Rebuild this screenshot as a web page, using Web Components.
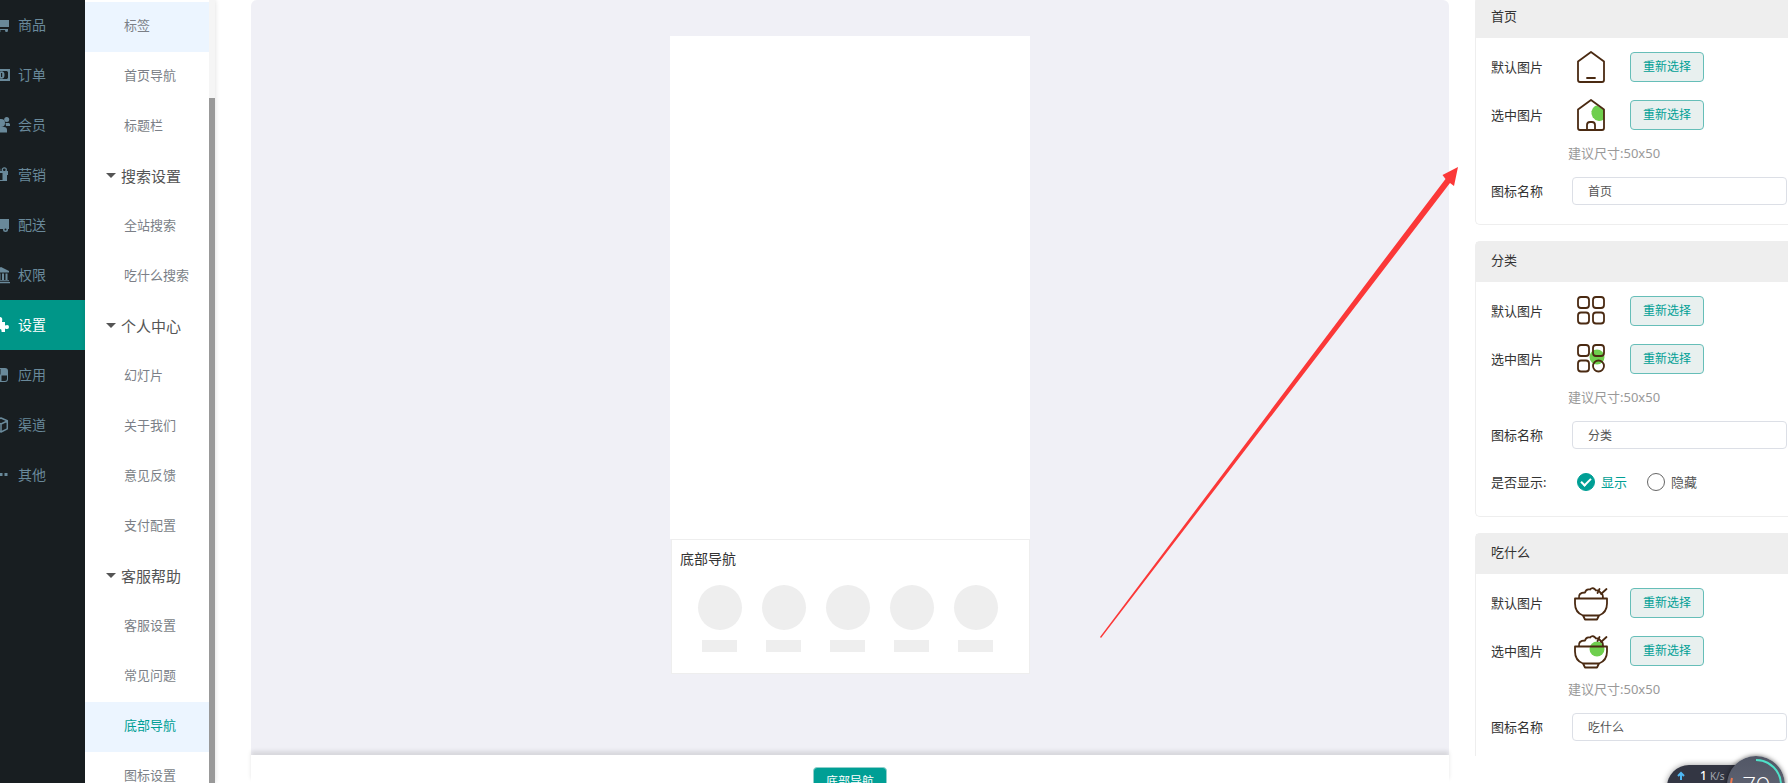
<!DOCTYPE html>
<html lang="zh-CN">
<head>
<meta charset="utf-8">
<meta name="viewport" content="width=device-width, initial-scale=1">
<title>底部导航</title>
<style>
  html, body {
    margin: 0;
    height: 100%;
    overflow: hidden;
  }

  body {
    background: #fff;
    color: #333;
    font-family: "Noto Sans", "Noto Sans CJK SC", sans-serif;
    font-size: 13px;
    line-height: 20px;
    --theme: #009f95;
  }
</style>
</head>
<body>
<admin-page></admin-page>

<script>
// Main navigation glyphs, 17x17
const NAV_ICONS = {
  cart: '<path d="M0 1h3l1 2h12v7H5v2h10v1H4L2 2H0z"/><circle cx="6" cy="14" r="1.500"/><circle cx="13.500" cy="13.500" r="1.500"/>',
  money: '<path fill-rule="evenodd" d="M0 2h17v12H0zM3 4a2 2 0 0 1-1 1v6a2 2 0 0 1 1 1h11a2 2 0 0 1 1-1V5a2 2 0 0 1-1-1z"/><ellipse cx="8.500" cy="8" rx="3" ry="3.700"/><path d="M8 6h1.200v4H8z" fill="#181e21"/>',
  users: '<circle cx="8" cy="6" r="4"/><path d="M2 15.500V13q0-3 3-3h6q3 0 3 3v2.500z"/><circle cx="13.700" cy="2.500" r="2.500"/><circle cx="2" cy="2.500" r="2.500"/><path d="M12.500 6H16l1 1v2H13zM0 6h4l-1 4H0z"/>',
  gift: '<path d="M1 4h14v4H1zM2 8h12v6H2z"/><circle cx="11.300" cy="2.800" r="2" fill="none" stroke="currentColor" stroke-width="1.300"/><circle cx="4.700" cy="2.800" r="2" fill="none" stroke="currentColor" stroke-width="1.300"/><path d="M7 6h2.500v7H7z" fill="#181e21"/>',
  truck: '<path d="M6 2h10v10H0V7l3-3h3z"/><circle cx="4" cy="13" r="2"/><circle cx="12.500" cy="12.500" r="2.500"/><circle cx="12.500" cy="12.500" r="1" fill="#181e21"/>',
  bank: '<path d="M8 0l8 4v1.500H0V4zM2 6.500h2V13H2zM5.500 6.500h2V13h-2zM9 6.500h2V13H9zM12.500 6.500h2V13h-2zM1 13.200h15v1H1zM0 15h17v1.300H0z"/>',
  puzzle: '<path d="M1 5h4.500Q4 0 7 0t2 5H12v3.500q4-1.500 4 1.500t-4 1.500V15H8.500Q9 12 7 12t-1.500 3H1z"/>',
  blocks: '<path d="M3 1h9q3 0 3 3v8q0 3-3 3H3q-3 0-3-3V4q0-3 3-3z"/><path d="M8.500 8.500H14V12q0 2-2 2H8.500zM1 4q0-2 2-2h4.500v5.500H1z" fill="#181e21"/>',
  cube: '<path d="M8 1l6.300 2.800v8L8 15l-6.300-3.200v-8zM1.700 4L8 7l6.300-3M8 7v8" fill="none" stroke="currentColor" stroke-width="1.500" stroke-linejoin="round"/>',
  dots: '<path d="M1 6h3v3H1zM6.500 6h3v3h-3zM11.500 6h3v3h-3z"/>',
};

// Tab bar icons, 40x40
const STROKE = 'fill="none" stroke="#4a2a12" stroke-width="1.800" stroke-linejoin="round" stroke-linecap="round"';
const GREEN = '<circle cx="26" cy="18" r="7.500" fill="#6fcf4e"/>';
const HOUSE = 'M7 14.500L20 5l13 9.500V33q0 2-2 2H9q-2 0-2-2z';
const BOWL = 'M4 15.500h32v5q0 9-8 12H12q-8-3-8-12zM12 32.500l2 4h12l2-4M8 15.500q-1-6 6-6 1-4 5-3 3-3 6 1 3-1 5 3 2 0 2 5M26.500 10l2-4M30 11l5.500-5';
const TAB_ICONS = {
  home: `<path d="${HOUSE}M16 31h8" ${STROKE}/>`,
  homeOn: `<path d="M24 11l2-.5 7 4.500v9.500A7.500 7.500 0 1 1 24 11z" fill="#6fcf4e"/><path d="${HOUSE}M16 35v-5q0-3 3-3h2q3 0 3 3v5" ${STROKE}/>`,
  grid: `<g ${STROKE}><rect x="7" y="6" width="11" height="11" rx="3"/><rect x="22" y="6" width="11" height="11" rx="3"/><rect x="7" y="21.500" width="11" height="11" rx="3"/><rect x="22" y="21.500" width="11" height="11" rx="3"/></g>`,
  gridOn: `${GREEN}<g ${STROKE}><rect x="7" y="6" width="11" height="11" rx="3"/><rect x="22" y="6" width="11" height="11" rx="3"/><rect x="7" y="21.500" width="11" height="11" rx="3"/><circle cx="27.500" cy="27" r="5.500"/></g>`,
  bowl: `<path d="${BOWL}" ${STROKE}/>`,
  bowlOn: `${GREEN}<path d="${BOWL}" ${STROKE}/>`,
};

class NavItem extends HTMLElement {
  connectedCallback() {
    const active = this.hasAttribute('active');
    this.attachShadow({ mode: 'open' }).innerHTML = `
      <style>
        :host {
          display: block;
          color: #69899a;
        }

        :host([active]) {
          background: #009688;
          color: #fff;
        }

        a {
          display: flex;
          align-items: center;
          gap: 8px;
          height: 50px;
          margin-left: -7px;
          color: inherit;
          font-size: 14px;
          text-decoration: none;
        }

        svg {
          width: 17px;
          height: 17px;
          fill: currentColor;
        }
      </style>
      <a href="#" ${active ? 'aria-current="page"' : ''}>
        <svg viewBox="0 0 17 17" aria-hidden="true">${NAV_ICONS[this.getAttribute('icon')]}</svg>
        <slot></slot>
      </a>
    `;
  }
}

class MainNav extends HTMLElement {
  constructor() {
    super();
    this.attachShadow({ mode: 'open' }).innerHTML = `
      <style>
        :host {
          display: block;
          width: 85px;
          overflow: hidden;
          background: #181e21;
        }
      </style>
      <nav><slot></slot></nav>
    `;
  }
}

class MenuItem extends HTMLElement {
  connectedCallback() {
    this.attachShadow({ mode: 'open' }).innerHTML = `
      <style>
        :host {
          display: block;
          color: #7b7f87;
        }

        :host([active]) {
          color: var(--theme);
        }

        :host([active]), :host([hover]) {
          background: #ecf5ff;
        }

        a {
          display: block;
          padding: 0 0 4px 39px;
          color: inherit;
          line-height: 46px;
          text-decoration: none;
        }
      </style>
      <a href="#"><slot></slot></a>
    `;
  }
}

class MenuGroup extends HTMLElement {
  connectedCallback() {
    this.attachShadow({ mode: 'open' }).innerHTML = `
      <style>
        :host {
          display: block;
        }

        button {
          display: flex;
          align-items: center;
          gap: 5px;
          width: 100%;
          height: 50px;
          padding: 0 0 3px 21px;
          border: 0;
          background: none;
          color: #555;
          font: inherit;
          font-size: 15px;
        }

        i {
          border: 5px solid transparent;
          border-top-color: #555;
          border-bottom: 0;
        }
      </style>
      <button type="button" aria-expanded="true"><i></i>${this.getAttribute('label')}</button>
      <slot></slot>
    `;
  }
}

class SideMenu extends HTMLElement {
  constructor() {
    super();
    this.attachShadow({ mode: 'open' }).innerHTML = `
      <style>
        :host {
          display: flex;
          width: 130px;
          overflow: hidden;
          box-shadow: 0 0 5px rgba(0, 0, 0, 0.14);
        }

        nav {
          flex: 1;
          padding-top: 2px;
        }

        .track {
          width: 6px;
          padding-top: 98px;
          box-sizing: border-box;
          background: #f5f5f5;
        }

        .thumb {
          height: 100%;
          background: #999;
        }
      </style>
      <nav><slot></slot></nav>
      <div class="track"><div class="thumb"></div></div>
    `;
  }
}

class PhonePreview extends HTMLElement {
  constructor() {
    super();
    this.attachShadow({ mode: 'open' }).innerHTML = `
      <style>
        :host {
          display: block;
          width: 360px;
        }

        .screen {
          height: 503px;
          background: #fff;
        }

        .tabbar {
          margin-left: 1px;
          padding: 9px 8px 21px;
          border: 1px solid #eee;
          background: #fff;
        }

        h2 {
          margin: 0 0 16px;
          color: #333;
          font-size: 14px;
          font-weight: normal;
          line-height: 20px;
        }

        ul {
          display: flex;
          justify-content: center;
          gap: 20px;
          margin: 0;
          padding: 0 6px 0 0;
          list-style: none;
        }

        li {
          display: flex;
          flex-direction: column;
          align-items: center;
          gap: 10px;
        }

        li::before {
          content: "";
          width: 44px;
          height: 45px;
          border-radius: 50%;
          background: #eee;
        }

        li::after {
          content: "";
          width: 35px;
          height: 12px;
          background: #eee;
        }
      </style>
      <div class="screen"></div>
      <div class="tabbar">
        <h2>底部导航</h2>
        <ul><li></li><li></li><li></li><li></li><li></li></ul>
      </div>
    `;
  }
}

class PageEditor extends HTMLElement {
  constructor() {
    super();
    this.attachShadow({ mode: 'open' }).innerHTML = `
      <style>
        :host {
          display: flex;
          flex-direction: column;
        }

        .canvas {
          flex: 1;
          display: flex;
          justify-content: center;
          align-items: flex-start;
          padding-top: 36px;
          border-radius: 6px 6px 0 0;
          background: #f0f0f6;
        }

        footer {
          display: flex;
          justify-content: center;
          height: 16px;
          padding-top: 12px;
          background: #fff;
          box-shadow: 0 -4px 4px rgba(0, 0, 0, 0.1);
        }

        button {
          height: 30px;
          padding: 0 12px;
          border: 1px solid #8fd0cb;
          border-radius: 4px;
          background: var(--theme);
          color: #fff;
          font: inherit;
          font-size: 12px;
          flex-shrink: 0;
        }
      </style>
      <div class="canvas"><slot></slot></div>
      <footer><button type="button">底部导航</button></footer>
    `;
  }
}

class TabCard extends HTMLElement {
  connectedCallback() {
    const name = this.getAttribute('name');
    const icon = this.getAttribute('icon');

    this.attachShadow({ mode: 'open' }).innerHTML = `
      <style>
        :host {
          display: block;
          padding-bottom: 19px;
          border: 1px solid #eee;
          border-right: 0;
          border-radius: 5px 0 0 5px;
          color: #333;
        }

        h3 {
          margin: 0 0 14px;
          padding: 8px 15px 12px;
          background: #eee;
          font-size: 13px;
          font-weight: normal;
          line-height: 20px;
        }

        .row {
          display: flex;
          align-items: center;
          height: 30px;
          margin-bottom: 18px;
          padding: 0 1px 0 15px;
        }

        .row > :first-child {
          width: 81px;
        }

        .picture svg {
          display: block;
          width: 40px;
          height: 40px;
          margin: 0 19px 0 -1px;
        }

        .picture button {
          width: 74px;
          height: 30px;
          padding: 0;
          border: 1px solid #66beb8;
          border-radius: 4px;
          background: #e8f0ef;
          color: var(--theme);
          font: inherit;
          font-size: 12px;
        }

        p {
          margin: -5px 0 14px 92px;
          color: #999;
        }

        .field {
          height: 28px;
          margin-bottom: 0;
        }

        input[type="text"] {
          flex: 1;
          min-width: 0;
          height: 28px;
          padding: 0 15px;
          box-sizing: border-box;
          border: 1px solid #dcdfe6;
          border-radius: 4px;
          color: #555;
          font: inherit;
          font-size: 12px;
        }

        .choice {
          margin: 18px 0 0;
        }

        .choice > :first-child {
          width: 86px;
        }

        .choice label {
          display: flex;
          align-items: center;
          gap: 6px;
          margin-right: 20px;
          color: #555;
        }

        .choice label:has(:checked) {
          color: var(--theme);
        }

        input[type="radio"] {
          appearance: none;
          display: grid;
          place-items: center;
          width: 18px;
          height: 18px;
          margin: 0;
          border: 1px solid #666;
          border-radius: 50%;
        }

        input[type="radio"]:checked {
          border-color: var(--theme);
          background: var(--theme);
        }

        input[type="radio"]:checked::before {
          content: "";
          width: 8px;
          height: 4px;
          margin-bottom: 3px;
          border: solid #fff;
          border-width: 0 0 2px 2px;
          transform: rotate(-45deg);
        }
      </style>
      <h3>${name}</h3>
      <div class="row picture">
        <span>默认图片</span>
        <svg viewBox="0 0 40 40" aria-hidden="true">${TAB_ICONS[icon]}</svg>
        <button type="button">重新选择</button>
      </div>
      <div class="row picture">
        <span>选中图片</span>
        <svg viewBox="0 0 40 40" aria-hidden="true">${TAB_ICONS[icon + 'On']}</svg>
        <button type="button">重新选择</button>
      </div>
      <p>建议尺寸:50x50</p>
      <div class="row field">
        <label for="name">图标名称</label>
        <input type="text" id="name" value="${name}">
      </div>
      ${this.hasAttribute('toggle') ? `
        <div class="row choice" role="radiogroup" aria-labelledby="show">
          <span id="show">是否显示:</span>
          <label><input type="radio" name="show" checked>显示</label>
          <label><input type="radio" name="show">隐藏</label>
        </div>
      ` : ''}
    `;
  }
}

class CardList extends HTMLElement {
  constructor() {
    super();
    this.attachShadow({ mode: 'open' }).innerHTML = `
      <style>
        :host {
          display: block;
          overflow: hidden;
          margin-bottom: 27px;
        }

        .list {
          display: flex;
          flex-direction: column;
          gap: 16px;
          margin-top: -3px;
        }
      </style>
      <div class="list"><slot></slot></div>
    `;
  }
}

// Red pointer laid over the page
class PointerArrow extends HTMLElement {
  constructor() {
    super();
    this.attachShadow({ mode: 'open' }).innerHTML = `
      <style>
        :host {
          position: absolute;
          top: 167px;
          right: 330px;
          width: 358px;
          height: 471px;
          pointer-events: none;
        }

        svg {
          display: block;
        }
      </style>
      <svg width="358" height="471" viewBox="0 0 358 471" aria-hidden="true">
        <path d="M358 0L354 19L350 16L291 93L1 471L0 470L284 93L345.500 12L342.500 8Z" fill="#fb3838"/>
      </svg>
    `;
  }
}

// Floating network speed gadget in the corner
class SpeedBall extends HTMLElement {
  constructor() {
    super();
    this.attachShadow({ mode: 'open' }).innerHTML = `
      <style>
        :host {
          position: absolute;
          right: 3px;
          bottom: -31px;
          display: flex;
          align-items: flex-start;
        }

        .rate {
          display: flex;
          align-items: center;
          gap: 3px;
          width: 80px;
          height: 44px;
          margin: 9px -20px 0 0;
          padding: 0 0 22px 10px;
          box-sizing: border-box;
          border-radius: 22px 0 0 22px;
          background: #333643;
          box-shadow: 0 0 6px rgba(0, 0, 0, 0.4);
          color: #a5a8b0;
          font-size: 10px;
        }

        .rate svg {
          margin-right: 12px;
        }

        b {
          color: #fff;
          font-size: 12px;
          font-weight: 500;
        }

        .ball {
          display: grid;
          place-items: center;
          position: relative;
          width: 58px;
          height: 58px;
          border-radius: 50%;
          background: linear-gradient(#525766, #666a79);
          box-shadow: 0 0 5px rgba(0, 0, 0, 0.6);
          color: #fff;
          font-family: Lato, sans-serif;
          font-size: 24px;
          font-weight: 300;
          line-height: 24px;
        }

        .ball svg {
          position: absolute;
          inset: 0;
        }
      </style>
      <div class="rate">
        <svg width="8" height="10" viewBox="0 0 8 10" aria-hidden="true">
          <path d="M4 9V2M1 5l3-3 3 3" fill="none" stroke="#4fb9f5" stroke-width="2"/>
        </svg>
        <b>1</b><span>K/s</span>
      </div>
      <div class="ball">
        <svg width="58" height="58" viewBox="0 0 58 58" fill="none" stroke-width="2" aria-hidden="true">
          <path d="M29 4A25 25 0 0 1 54 29" stroke="#4fe0c8"/>
          <path d="M4 29Q4 26 5 22" stroke="#f0794f"/>
        </svg>
        70
      </div>
    `;
  }
}

class AdminPage extends HTMLElement {
  constructor() {
    super();
    this.attachShadow({ mode: 'open' }).innerHTML = `
      <style>
        :host {
          display: flex;
          position: relative;
          height: 100vh;
          overflow: hidden;
        }

        main-nav, side-menu {
          flex-shrink: 0;
        }

        page-editor {
          flex: 1;
          margin: 0 26px 0 36px;
        }

        card-list {
          width: 313px;
        }
      </style>
      <main-nav>
        <nav-item icon="cart">商品</nav-item>
        <nav-item icon="money">订单</nav-item>
        <nav-item icon="users">会员</nav-item>
        <nav-item icon="gift">营销</nav-item>
        <nav-item icon="truck">配送</nav-item>
        <nav-item icon="bank">权限</nav-item>
        <nav-item icon="puzzle" active>设置</nav-item>
        <nav-item icon="blocks">应用</nav-item>
        <nav-item icon="cube">渠道</nav-item>
        <nav-item icon="dots">其他</nav-item>
      </main-nav>
      <side-menu>
        <menu-item hover>标签</menu-item>
        <menu-item>首页导航</menu-item>
        <menu-item>标题栏</menu-item>
        <menu-group label="搜索设置">
          <menu-item>全站搜索</menu-item>
          <menu-item>吃什么搜索</menu-item>
        </menu-group>
        <menu-group label="个人中心">
          <menu-item>幻灯片</menu-item>
          <menu-item>关于我们</menu-item>
          <menu-item>意见反馈</menu-item>
          <menu-item>支付配置</menu-item>
        </menu-group>
        <menu-group label="客服帮助">
          <menu-item>客服设置</menu-item>
          <menu-item>常见问题</menu-item>
          <menu-item active>底部导航</menu-item>
          <menu-item>图标设置</menu-item>
        </menu-group>
      </side-menu>
      <page-editor>
        <phone-preview></phone-preview>
      </page-editor>
      <card-list>
        <tab-card name="首页" icon="home"></tab-card>
        <tab-card name="分类" icon="grid" toggle></tab-card>
        <tab-card name="吃什么" icon="bowl"></tab-card>
      </card-list>
      <pointer-arrow></pointer-arrow>
      <speed-ball></speed-ball>
    `;
  }
}

customElements.define('nav-item', NavItem);
customElements.define('main-nav', MainNav);
customElements.define('menu-item', MenuItem);
customElements.define('menu-group', MenuGroup);
customElements.define('side-menu', SideMenu);
customElements.define('phone-preview', PhonePreview);
customElements.define('page-editor', PageEditor);
customElements.define('tab-card', TabCard);
customElements.define('card-list', CardList);
customElements.define('pointer-arrow', PointerArrow);
customElements.define('speed-ball', SpeedBall);
customElements.define('admin-page', AdminPage);
</script>
</body>
</html>
